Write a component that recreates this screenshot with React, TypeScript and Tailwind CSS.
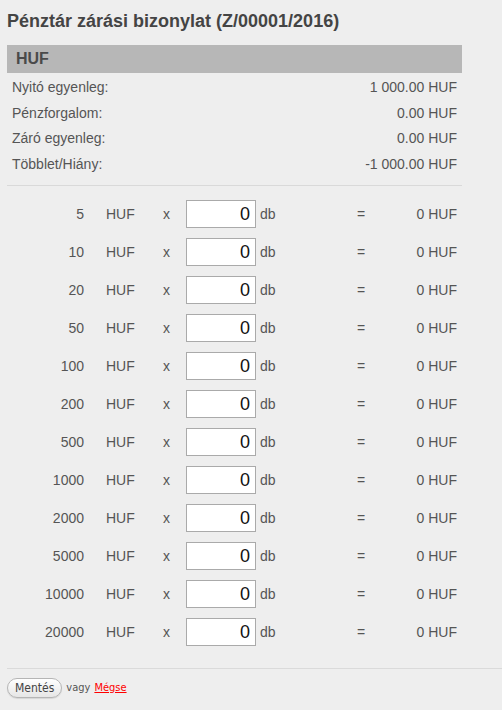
import React from 'react';

const summary = [
  { label: 'Nyitó egyenleg:', value: '1 000.00 HUF' },
  { label: 'Pénzforgalom:', value: '0.00 HUF' },
  { label: 'Záró egyenleg:', value: '0.00 HUF' },
  { label: 'Többlet/Hiány:', value: '-1 000.00 HUF' },
];

const denominations = [5, 10, 20, 50, 100, 200, 500, 1000, 2000, 5000, 10000, 20000];

const DenomRow = ({ value }: { value: number }) => (
  <div className="flex items-center h-[38px] text-[14px] text-[#555]">
    <span className="w-[77px] text-right">{value}</span>
    <span className="w-[57px] ml-[22px]">HUF</span>
    <span className="w-[23px]">x</span>
    <input
      defaultValue="0"
      className="w-[70px] h-[28px] border border-[#aaa] bg-white text-right pr-[5px] text-[18px] text-[#111] outline-none"
      style={{ fontFamily: '"Liberation Sans", Arial, sans-serif' }}
    />
    <span className="ml-[4px] w-[97px]">db</span>
    <span className="w-[10px]">=</span>
    <span className="flex-1 text-right">0 HUF</span>
  </div>
);

export default function App() {
  return (
    <div
      className="min-h-[710px] w-[502px] bg-[#eeeeee] pt-[9px] text-[#555]"
      style={{ fontFamily: '"Liberation Sans", Arial, sans-serif' }}
    >
      <div className="pl-[7px] w-[462px]">
        <h1 className="text-[18px] font-bold text-[#444] leading-[24px]">
          Pénztár zárási bizonylat (Z/00001/2016)
        </h1>
        <div className="mt-[12px] h-[28px] bg-[#b7b7b7] flex items-center pl-[9px]">
          <span className="text-[16px] font-bold text-[#4a4a4a]">HUF</span>
        </div>
        <div className="px-[5px] pt-[2px]">
          {summary.map((r) => (
            <div key={r.label} className="flex justify-between items-center h-[25.6px] text-[14px]">
              <span>{r.label}</span>
              <span>{r.value}</span>
            </div>
          ))}
        </div>
        <div className="mt-[8px] border-t border-[#d9d9d9]" />
        <div className="mt-[9px] pr-[5px]">
          {denominations.map((d) => (
            <DenomRow key={d} value={d} />
          ))}
        </div>
      </div>
      <div className="mt-[17px] ml-[7px] border-t border-[#dadada]" />
      <div
        className="ml-[7px] mt-[9px] flex items-center text-[11px]"
        style={{ fontFamily: '"DejaVu Sans Condensed", "DejaVu Sans", Tahoma, sans-serif' }}
      >
        <button className="h-[20px] px-[7px] rounded-full border border-[#b5b5b5] bg-gradient-to-b from-white to-[#e6e6e6] text-[12px] text-[#444] leading-none shadow-[0_1px_1px_rgba(0,0,0,0.1)]">
          Mentés
        </button>
        <span className="ml-[4px] text-[#555]">vagy</span>
        <a href="#" className="ml-[4px] text-[#ff0000] underline">
          Mégse
        </a>
      </div>
    </div>
  );
}
